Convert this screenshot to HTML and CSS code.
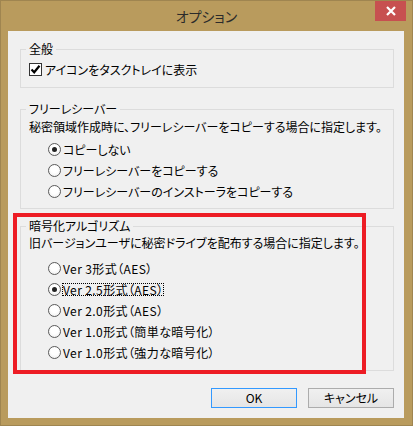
FILE: index.html
```html
<!DOCTYPE html>
<html lang="ja">
<head>
<meta charset="utf-8">
<title>オプション</title>
<link rel="stylesheet" href="styles.css">
</head>
<body>
<div class="window">
  <div class="titlebar">
    <span></span>
    <span class="title">オプション</span>
    <span class="close"><svg width="10" height="10" viewBox="0 0 10 10"><path d="M1 1L9 9M9 1L1 9" stroke="#fff" stroke-width="2.2" fill="none"/></svg></span>
  </div>
  <div class="client">
    <div class="group g1">
      <div class="legend">全般</div>
      <div class="check-row">
        <span class="checkbox"><svg width="11" height="11" viewBox="0 0 11 11"><path d="M1.5 5.5L4.2 8.3L9.5 1.8" stroke="#000" stroke-width="2.2" fill="none"/></svg></span>
        <span>アイコンをタスクトレイに表示</span>
      </div>
    </div>
    <div class="group g2">
      <div class="legend">フリーレシーバー</div>
      <div class="desc">秘密領域作成時に、フリーレシーバーをコピーする場合に指定します。</div>
      <div class="radios">
        <div class="radio-row"><span class="radio checked"></span><span>コピーしない</span></div>
        <div class="radio-row"><span class="radio"></span><span>フリーレシーバーをコピーする</span></div>
        <div class="radio-row"><span class="radio"></span><span>フリーレシーバーのインストーラをコピーする</span></div>
      </div>
    </div>
    <div class="group g3">
      <div class="legend">暗号化アルゴリズム</div>
      <div class="desc">旧バージョンユーザに秘密ドライブを配布する場合に指定します。</div>
      <div class="radios">
        <div class="radio-row"><span class="radio"></span><span class="ver">Ver 3形式（AES）</span></div>
        <div class="radio-row"><span class="radio checked"></span><span class="ver focus">Ver 2.5形式（AES）</span></div>
        <div class="radio-row"><span class="radio"></span><span class="ver">Ver 2.0形式（AES）</span></div>
        <div class="radio-row"><span class="radio"></span><span class="ver">Ver 1.0形式（簡単な暗号化）</span></div>
        <div class="radio-row"><span class="radio"></span><span class="ver">Ver 1.0形式（強力な暗号化）</span></div>
      </div>
    </div>
    <div class="buttons">
      <button class="btn default">OK</button>
      <button class="btn">キャンセル</button>
    </div>
    <div class="highlight"></div>
  </div>
</div>
</body>
</html>
```
FILE: styles.css
```css
html, body {
  margin: 0;
  padding: 0;
  background: #b99b5d;
}
body {
  width: 413px;
  height: 426px;
  font-family: "Noto Sans CJK JP", "Noto Sans", sans-serif;
  font-size: 12px;
  font-feature-settings: "palt";
  color: #000;
}
.window {
  box-sizing: border-box;
  width: 413px;
  height: 426px;
  border: 1px solid #9f8550;
  background: #b99b5d;
}
.titlebar {
  height: 30px;
  display: grid;
  grid-template-columns: 1fr auto 1fr;
}
.title {
  align-self: center;
  font-size: 14px;
  line-height: 20px;
  color: #2b2b2b;
  margin-top: -1px;
}
.close {
  justify-self: end;
  align-self: start;
  width: 31px;
  height: 20px;
  margin-right: 6px;
  background: #c75050;
  display: flex;
  align-items: center;
  justify-content: center;
}
.close svg { display: block; }
.client {
  position: relative;
  box-sizing: border-box;
  width: 396px;
  height: 387px;
  margin-left: 7px;
  background: #f0f0f0;
  padding: 18px 10px 10px 12px;
}
.group {
  border: 1px solid #dcdcdc;
  padding: 0 8px;
}
.legend {
  width: max-content;
  height: 16px;
  line-height: 16px;
  margin: -9px 0 0 -3px;
  padding: 0 3px;
  background: #f0f0f0;
}
.g1 { padding-bottom: 8px; }
.g2 { margin-top: 21px; padding-bottom: 6px; }
.g3 { margin-top: 17px; padding-bottom: 7px; }
.check-row {
  display: flex;
  align-items: center;
  height: 19px;
  margin-top: 3px;
}
.checkbox {
  box-sizing: border-box;
  width: 13px;
  height: 13px;
  border: 1px solid #333;
  background: #fff;
  margin-right: 3px;
  display: flex;
  align-items: center;
  justify-content: center;
}
.checkbox svg { display: block; }
.desc {
  height: 18px;
  line-height: 18px;
}
.g2 .desc { margin-top: 1px; }
.g2 .radios { margin-top: 3px; }
.g3 .radios { margin-top: 6px; }
.radio-row {
  display: flex;
  align-items: center;
  height: 21px;
  padding-left: 19px;
}
.radio {
  box-sizing: border-box;
  width: 13px;
  height: 13px;
  border: 1px solid #5a5a5a;
  border-radius: 50%;
  background: radial-gradient(circle at 50% 40%, #ffffff 40%, #e8e8e8);
  margin-right: 2px;
  display: flex;
  align-items: center;
  justify-content: center;
  flex: none;
}
.radio.checked::after {
  content: "";
  width: 5px;
  height: 5px;
  border-radius: 50%;
  background: #222;
}
.ver {
  letter-spacing: 0.4px;
}
.focus {
  border: 1px dotted #000;
  line-height: 11px;
  margin-left: -1px;
}
.buttons {
  display: flex;
  justify-content: flex-end;
  gap: 11px;
  margin-top: 17px;
}
.btn {
  box-sizing: border-box;
  width: 86px;
  height: 20px;
  margin: 0;
  padding: 0;
  border: 1px solid #acacac;
  background: linear-gradient(#f0f0f0, #e5e5e5);
  font-family: inherit;
  font-size: 12px;
  font-feature-settings: "palt";
  color: #000;
  line-height: 18px;
}
.btn.default {
  border-color: #3399ff;
}
.highlight {
  position: absolute;
  left: 5px;
  top: 182px;
  width: 353px;
  height: 161px;
  box-sizing: border-box;
  border: 4px solid #ed1c24;
}
```
